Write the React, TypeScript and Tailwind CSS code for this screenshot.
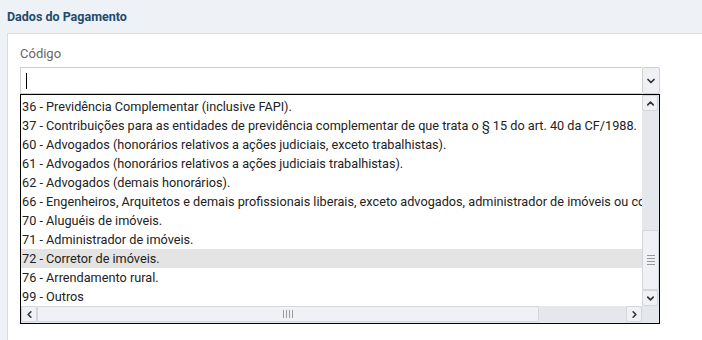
import { ChevronDown, ChevronUp, ChevronLeft, ChevronRight } from "lucide-react";

const CODIGOS = [
  "36 - Previdência Complementar (inclusive FAPI).",
  "37 - Contribuições para as entidades de previdência complementar de que trata o § 15 do art. 40 da CF/1988.",
  "60 - Advogados (honorários relativos a ações judiciais, exceto trabalhistas).",
  "61 - Advogados (honorários relativos a ações judiciais trabalhistas).",
  "62 - Advogados (demais honorários).",
  "66 - Engenheiros, Arquitetos e demais profissionais liberais, exceto advogados, administrador de imóveis ou corretor de imóveis.",
  "70 - Aluguéis de imóveis.",
  "71 - Administrador de imóveis.",
  "72 - Corretor de imóveis.",
  "76 - Arrendamento rural.",
  "99 - Outros",
];

const SELECIONADO = "72 - Corretor de imóveis.";

function ScrollBtn({ children }: { children: React.ReactNode }) {
  return (
    <div className="w-[16px] h-[16px] bg-[#eef2f7] border border-[#d3d6da] rounded-[2px] flex items-center justify-center text-[#333]">
      {children}
    </div>
  );
}

export default function App() {
  return (
    <div className="w-[702px] h-[340px] bg-[#eef2f6] overflow-hidden" style={{ fontFamily: "Roboto, 'Liberation Sans', sans-serif" }}>
      <div className="h-[33px] pl-[7px] pt-[9px]">
        <h1 className="text-[12.5px] font-bold text-[#1c4b6e] leading-[16px]">Dados do Pagamento</h1>
      </div>

      <div className="ml-[7px] h-[307px] bg-white border-l border-t border-[#d8dde3] pl-[12px] pt-[12px]">
        <label className="block text-[13px] text-[#666] leading-[16px] mb-[5px]">Código</label>

        {/* campo com seta */}
        <div className="flex w-[640px] h-[27px]">
          <div className="flex-1 border border-[#cfcfcf] border-r-0 flex items-center pl-[5px]">
            <span className="w-px h-[16px] bg-black" />
          </div>
          <div className="w-[18px] border border-[#cfcfcf] rounded-[2px] bg-[#eef0f3] flex items-center justify-center">
            <ChevronDown size={12} strokeWidth={3.5} className="text-[#333]" />
          </div>
        </div>

        {/* lista */}
        <div className="w-[640px] h-[230px] border border-black flex flex-col">
          <div className="flex flex-1 min-h-0">
            <div className="flex-1 overflow-hidden pt-[2px]">
              {CODIGOS.map((c) => (
                <div
                  key={c}
                  className={`h-[19px] leading-[19px] pl-[1px] text-[12.7px] text-[#222] whitespace-nowrap ${c === SELECIONADO ? "bg-[#e4e4e4]" : ""}`}
                >
                  {c}
                </div>
              ))}
            </div>
            {/* barra vertical */}
            <div className="w-[17px] bg-[#e4e7eb] flex flex-col">
              <ScrollBtn><ChevronUp size={11} strokeWidth={3.5} /></ScrollBtn>
              <div className="flex-1 flex flex-col justify-end">
                <div className="h-[60px] bg-[#eef2f7] border border-[#d3d6da] rounded-[2px] flex items-center justify-center">
                  <div className="flex flex-col gap-[2px]">
                    <span className="block w-[8px] h-px bg-[#999]" />
                    <span className="block w-[8px] h-px bg-[#999]" />
                    <span className="block w-[8px] h-px bg-[#999]" />
                    <span className="block w-[8px] h-px bg-[#999]" />
                  </div>
                </div>
              </div>
              <ScrollBtn><ChevronDown size={11} strokeWidth={3.5} /></ScrollBtn>
            </div>
          </div>
          {/* barra horizontal */}
          <div className="h-[17px] flex bg-[#e4e7eb]">
            <ScrollBtn><ChevronLeft size={11} strokeWidth={3.5} /></ScrollBtn>
            <div className="w-[502px] h-[16px] bg-[#eef2f7] border border-[#d3d6da] rounded-[2px] flex items-center justify-center">
              <div className="flex gap-[2px]">
                <span className="block w-px h-[8px] bg-[#999]" />
                <span className="block w-px h-[8px] bg-[#999]" />
                <span className="block w-px h-[8px] bg-[#999]" />
                <span className="block w-px h-[8px] bg-[#999]" />
              </div>
            </div>
            <div className="flex-1" />
            <ScrollBtn><ChevronRight size={11} strokeWidth={3.5} /></ScrollBtn>
            <div className="w-[17px]" />
          </div>
        </div>
      </div>
    </div>
  );
}
